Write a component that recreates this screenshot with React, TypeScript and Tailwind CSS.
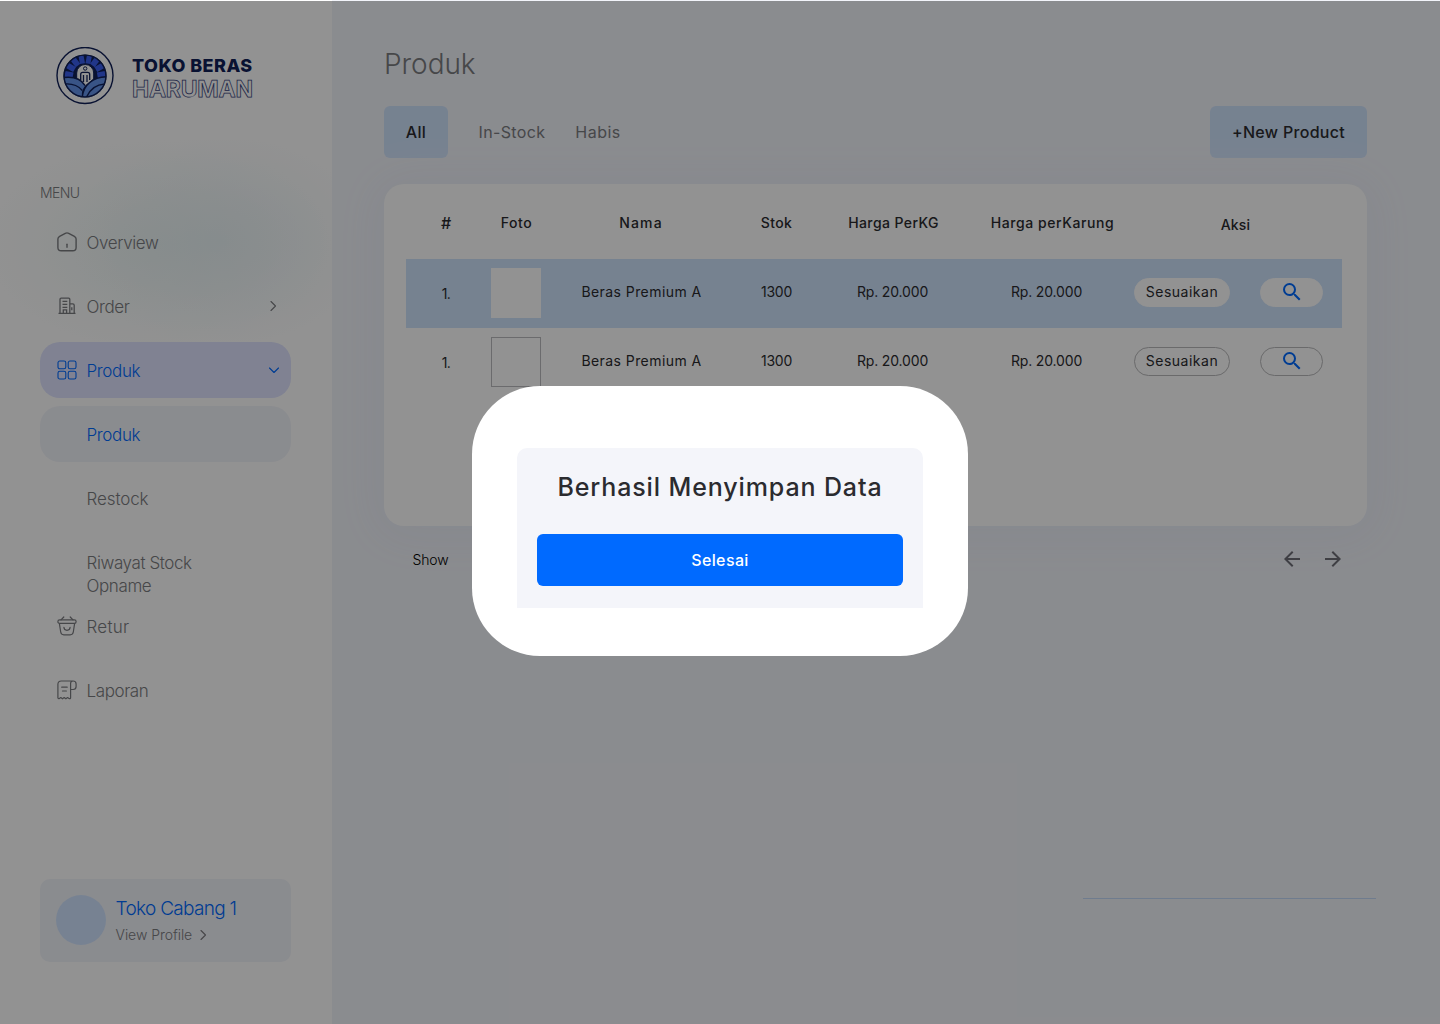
import type { ReactNode } from 'react';

type IconProps = { className?: string };

function Logo() {
  return (
    <svg viewBox="0 0 58 58" className="size-[58px] shrink-0" fill="none">
      <circle cx="29" cy="28.500" r="28" stroke="#102058" strokeWidth="1.400" />
      <circle cx="29" cy="29" r="21.600" fill="#102058" />
      <g stroke="#3a5ff0" strokeWidth="5.800">
        <path d="M17 28.300 8.900 26.800" />
        <path d="M18.600 22.600 11.400 18.400" />
        <path d="M22 18.600 17.100 12" />
        <path d="M26.500 16.600 25 8.800" strokeWidth="5" />
        <path d="M31.900 16.600 33.400 8.800" strokeWidth="5" />
        <path d="M36.400 18.600 41.300 12" />
        <path d="M39.800 22.600 47 18.400" />
        <path d="M41.400 28.300 49.500 26.800" />
      </g>
      <path d="M20.700 32v-6a8.500 8.500 0 0 1 17 0V32l-8.500 7z" fill="#fff" stroke="#102058" strokeWidth="1" />
      <circle cx="29.200" cy="21.500" r="1.700" fill="#fff" stroke="#102058" strokeWidth="1" />
      <path d="M24.700 33v-5.600c0-1.200.8-2 2-2h5c1.200 0 2 .8 2 2V33M27.500 28v7M31 28v7" stroke="#102058" strokeWidth="1.300" />
      <path d="M8.500 30.500c9-.8 17 1.500 20.500 8.500C26 42.500 25.500 46 26 50 15 48.500 8.500 40.500 8.500 30.500z" fill="#6493ea" />
      <path d="M49.600 30C38 30.500 28 36 26.500 50 40 51.500 50 42 49.600 30z" fill="#6493ea" />
      <g stroke="#102058" strokeWidth="1.400">
        <path d="M8 30.500c9-1 17 1.500 21 7.800" />
        <path d="M9 37c7-.5 13 1.500 17.300 6.500" />
        <path d="M50 29.800C37 30.300 27.500 38 26.300 50" />
        <path d="M48.700 37c-8 .5-14.500 5-18.200 13" />
      </g>
      <circle cx="29" cy="29" r="20.900" stroke="#102058" strokeWidth="1.400" />
    </svg>
  );
}

function HomeIcon({ className }: IconProps) {
  return (
    <svg viewBox="0 0 20 20" className={className} fill="none" stroke="currentColor" strokeWidth="1.400" strokeLinecap="round" strokeLinejoin="round">
      <path d="M8.300 1.300 2.600 4.300C1.500 4.900.9 5.900.9 7.100V15.500c0 2 1.300 3.300 3.300 3.300h11.600c2 0 3.300-1.300 3.300-3.300V7.100c0-1.200-.6-2.200-1.700-2.800L11.700 1.300c-1.100-.6-2.300-.6-3.400 0z" />
      <path d="M10 12.300v3" />
    </svg>
  );
}

function BuildingIcon({ className }: IconProps) {
  return (
    <svg viewBox="0 0 18 18" className={className} fill="none" stroke="currentColor" strokeWidth="1.300">
      <path d="M.5 16.300h17M2 16V2.200c0-.7.400-1.100 1.100-1.100h7.600c.7 0 1.100.4 1.100 1.100V16M12 6.800h2.800c.9 0 1.400.5 1.400 1.400V16M4.500 4.400h4.800M4.500 7.400h4.800M4.500 10.300h4.800M5.300 16v-3.100h3.300V16M13.800 10.200v3" />
    </svg>
  );
}

function GridIcon({ className }: IconProps) {
  return (
    <svg viewBox="0 0 20 20" className={className} fill="none" stroke="currentColor" strokeWidth="1.100">
      <rect x="1" y="1" width="7.800" height="7.800" rx="1.800" />
      <rect x="11.200" y="1" width="7.800" height="7.800" rx="1.800" />
      <rect x="1" y="11.200" width="7.800" height="7.800" rx="1.800" />
      <rect x="11.200" y="11.200" width="7.800" height="7.800" rx="1.800" />
    </svg>
  );
}

function BasketIcon({ className }: IconProps) {
  return (
    <svg viewBox="0 0 20 20" className={className} fill="none" stroke="currentColor" strokeWidth="1.200" strokeLinecap="round" strokeLinejoin="round">
      <path d="M6.800 1 4 3.900M13.200 1 16 3.900" />
      <rect x=".9" y="3.900" width="18.200" height="3.500" rx="1.700" />
      <path d="M2.400 7.600 3.700 16c.3 1.800 1.300 2.800 3.100 2.800h6.400c1.800 0 2.800-1 3.100-2.800l1.300-8.400" />
      <path d="M6.900 11.300c.2 4 6 4 6.200 0" />
    </svg>
  );
}

function ReceiptIcon({ className }: IconProps) {
  return (
    <svg viewBox="0 0 20 20" className={className} fill="none" stroke="currentColor" strokeWidth="1.200" strokeLinecap="round" strokeLinejoin="round">
      <path d="M16.500 1H4.200C2.100 1 .9 2.200.9 4.300v13.400c0 .9.700 1.200 1.500.8l1.400-.9 1.700 1.200 1.700-1.200 1.700 1.200 1.700-1.200 1.400.9c.8.4 1.600.1 1.600-.8V3.300C13.600 1.900 14.600 1 16.100 1c1.800 0 3 1.200 3 3v2.600c0 2-.9 2.900-2.900 2.900h-2.600" />
      <path d="M4.700 7.200h5.500M5.500 11h3.900" />
    </svg>
  );
}

function Chevron({ className }: IconProps) {
  return (
    <svg viewBox="0 0 12 12" className={className} fill="none" stroke="currentColor" strokeWidth="1.100" strokeLinecap="round" strokeLinejoin="round">
      <path d="m4 1.500 4.500 4.500L4 10.500" />
    </svg>
  );
}

function SearchIcon() {
  return (
    <svg viewBox="0 0 24 24" className="mb-px size-6 text-[#006aff]" fill="currentColor">
      <path d="M15.500 14h-.79l-.28-.27A6.470 6.470 0 0 0 16 9.500 6.500 6.500 0 1 0 9.500 16c1.610 0 3.090-.59 4.230-1.570l.27.28v.79l5 4.990L20.490 19l-4.990-5zm-6 0C7.010 14 5 11.990 5 9.500S7.010 5 9.500 5 14 7.010 14 9.500 11.990 14 9.500 14z" />
    </svg>
  );
}

function ArrowIcon({ className }: IconProps) {
  return (
    <svg viewBox="0 0 24 24" className={className} fill="currentColor">
      <path d="m12 4-1.410 1.410L16.170 11H4v2h12.170l-5.580 5.590L12 20l8-8z" />
    </svg>
  );
}

function MenuItem({ icon, children, className, trailing }: { icon?: ReactNode; children: ReactNode; className: string; trailing?: ReactNode }) {
  return (
    <div className={`flex h-14 w-[251px] shrink-0 items-center rounded-[20px] pr-[11px] pl-4 text-[17px] font-[330] ${className}`}>
      <span className="flex w-[30.500px] shrink-0 items-center">{icon}</span>
      <span className="flex-1 pt-[3px]">{children}</span>
      {trailing}
    </div>
  );
}

function Sidebar() {
  return (
    <aside className="relative flex w-[332px] shrink-0 flex-col bg-white pl-10 text-[#7b7c80]">
      <div className="pointer-events-none absolute top-[140px] left-0 h-[210px] w-[332px] bg-[radial-gradient(ellipse_45%_50%_at_66%_48%,#e0eef480,transparent),radial-gradient(ellipse_52%_50%_at_48%_50%,#ebf6f3b3,transparent)]" />
      <div className="relative mt-[47px] flex h-[58px] items-center pl-[15.500px]">
        <Logo />
        <div className="ml-[18.500px] flex flex-col pt-[4px]">
          <span className="text-[18px] leading-[22px] font-extrabold tracking-[0.460px] text-[#102058]">TOKO BERAS</span>
          <span className="text-[23px] leading-6 font-bold tracking-[-0.250px] text-transparent [-webkit-text-stroke:0.750px_#33407a]">HARUMAN</span>
        </div>
      </div>
      <div className="relative mt-[79px] h-[18px] text-[14px] leading-[18px] font-[330] tracking-[-0.600px]">MENU</div>
      <nav className="relative mt-[12px] flex flex-col gap-2">
        <MenuItem icon={<HomeIcon className="ml-[0.600px] size-5" />} className="tracking-[-0.400px]">Overview</MenuItem>
        <MenuItem icon={<BuildingIcon className="ml-[1.600px] size-[18px]" />} className="tracking-[-0.400px]" trailing={<Chevron className="mr-px size-3" />}>Order</MenuItem>
        <MenuItem icon={<GridIcon className="ml-[0.600px] size-5" />} className="bg-[#dfe3ff] tracking-[-0.350px] text-[#006aff]" trailing={<Chevron className="size-3 rotate-90" />}>Produk</MenuItem>
        <MenuItem className="bg-[#f2f4fa] tracking-[-0.350px] text-[#006aff]">Produk</MenuItem>
        <MenuItem className="tracking-[-0.100px]">Restock</MenuItem>
        <MenuItem className="leading-[23px] tracking-[-0.400px]">
          <span className="mt-[22px] block">Riwayat Stock<br />Opname</span>
        </MenuItem>
        <MenuItem icon={<BasketIcon className="ml-[0.600px] size-5" />} className="tracking-[0.250px]">Retur</MenuItem>
        <MenuItem icon={<ReceiptIcon className="ml-[0.600px] size-5" />} className="tracking-[-0.400px]">Laporan</MenuItem>
      </nav>
      <div className="mt-auto mb-[62px] flex h-[83px] w-[251px] items-center rounded-[10px] bg-[#f2f4fa] pl-4">
        <div className="-mt-px size-[50px] rounded-full bg-[#d0e4ff]" />
        <div className="ml-[9.500px] flex flex-col pt-[2px]">
          <span className="text-[19px] leading-[26px] font-[330] tracking-[-0.690px] text-[#006aff]">Toko Cabang 1</span>
          <span className="mt-px flex items-center text-[14px] leading-6 font-[330] tracking-[-0.050px]">
            View Profile <Chevron className="ml-[5px] size-3" />
          </span>
        </div>
      </div>
    </aside>
  );
}

const COLUMNS = 'grid grid-cols-[80px_60px_190px_81px_150px_158px_217px]';

function ProductRow({ selected = false }: { selected?: boolean }) {
  const rowColor = selected ? 'bg-[#cfe3fc]' : '';
  const outline = selected ? 'border-white' : 'border-[#b9b9bb]';
  const photo = selected ? 'border-white' : 'border-[#bcbcbe]';
  return (
    <div className={`${COLUMNS} h-[69px] items-center text-center text-[14px] leading-5 ${rowColor}`}>
      <span className="pt-px tracking-[-0.500px]">1.</span>
      <span className={`-mt-[2px] ml-[5px] size-[50px] border bg-white ${photo}`} />
      <span className="-mt-[3px] pl-px tracking-[0.430px]">Beras Premium A</span>
      <span className="-mt-[3px] tracking-[-0.200px]">1300</span>
      <span className="-mt-[3px] pl-px tracking-[-0.150px]">Rp. 20.000</span>
      <span className="-mt-[3px] pl-px tracking-[-0.150px]">Rp. 20.000</span>
      <div className="-mt-[2px] flex gap-[30px] pl-[9px]">
        <button className={`h-[29px] w-24 rounded-full border bg-white pb-px leading-5 tracking-[0.500px] ${outline}`}>Sesuaikan</button>
        <button className={`flex h-[29px] w-[63px] items-center justify-center rounded-full border bg-white ${outline}`}>
          <SearchIcon />
        </button>
      </div>
    </div>
  );
}

function ProductTable() {
  return (
    <section className="h-[342px] w-[983px] rounded-[20px] bg-white pl-[22px] shadow-[0_4px_44px_8px_#eaeff9]">
      <div className="w-[936px]">
        <div className={`${COLUMNS} h-[75px] pt-[29px] text-center text-[14px] leading-5 font-medium`}>
          <span className="text-[16px]">#</span>
          <span className="pl-px tracking-[0.500px]">Foto</span>
          <span className="tracking-[1.200px]">Nama</span>
          <span className="tracking-[0.400px]">Stok</span>
          <span className="pl-[3px] tracking-[0.400px]">Harga PerKG</span>
          <span className="-mr-px pl-3 tracking-[0.560px]">Harga perKarung</span>
          <span className="pt-[2px] pl-1 tracking-[0.200px]">Aksi</span>
        </div>
        <ProductRow selected />
        <ProductRow />
      </div>
    </section>
  );
}

function SuccessDialog() {
  return (
    <div className="absolute top-[386px] left-[472px] h-[270px] w-[496px] rounded-[68px] bg-white px-[45px] pt-[62px]">
      <div className="flex h-40 flex-col items-center rounded-t-[10px] bg-[#f4f5fa] px-5 pt-[21px]">
        <h2 className="text-[25px] leading-9 font-medium tracking-[0.880px] whitespace-nowrap">Berhasil Menyimpan Data</h2>
        <button className="mt-[29px] h-[52px] w-full rounded-md bg-[#006aff] text-[16px] font-medium tracking-[0.380px] text-white">Selesai</button>
      </div>
    </div>
  );
}

export default function App() {
  return (
    <div className="relative flex h-[1024px] w-[1440px] overflow-hidden bg-[#f2f4fa] font-['Inter',sans-serif] text-[#2b2b2f]">
      <Sidebar />
      <main className="flex flex-1 flex-col pl-[52px]">
        <h1 className="mt-[44px] text-[28px] leading-10 font-[300] tracking-[-0.050px] text-[#7b7c80]">Produk</h1>
        <div className="mt-[22px] flex h-[52px] w-[983px] items-center text-[16px]">
          <button className="h-full w-16 rounded-md bg-[#cfe3fc] font-medium tracking-[0.300px]">All</button>
          <span className="ml-[30.500px] tracking-[0.350px] text-[#7b7c80]">In-Stock</span>
          <span className="ml-[30px] tracking-[0.500px] text-[#7b7c80]">Habis</span>
          <button className="ml-auto h-full w-[157px] rounded-md bg-[#cfe3fc] font-medium tracking-[0.300px]">+New Product</button>
        </div>
        <div className="mt-[26px]">
          <ProductTable />
        </div>
        <div className="relative mt-[21px] flex h-6 w-[983px] items-center pr-[22px] pl-[28.500px] text-[14px]">
          <span className="pt-[1px] font-[350] tracking-[-0.150px] text-black">Show</span>
          <div className="ml-auto flex gap-[17px] text-[#6e6e78]">
            <ArrowIcon className="size-6 rotate-180" />
            <ArrowIcon className="size-6" />
          </div>
        </div>
        <div className="mt-[327px] ml-[699px] h-px w-[293px] bg-[#c3d9f9]" />
      </main>
      <div className="absolute inset-x-0 top-px bottom-0 bg-black/[0.427]" />
      <SuccessDialog />
    </div>
  );
}
